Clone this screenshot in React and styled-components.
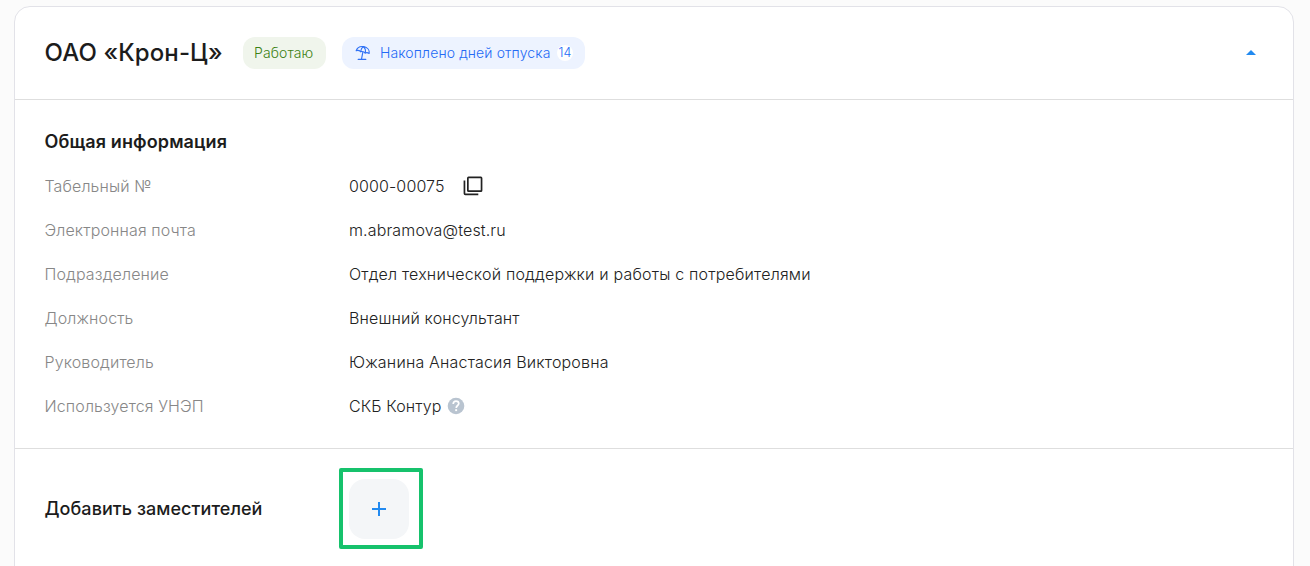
import React from "react";
import styled, { createGlobalStyle } from "styled-components";

const GlobalStyle = createGlobalStyle`
  *, *::before, *::after { box-sizing: border-box; }
  body {
    margin: 0;
    height: 566px;
    overflow: hidden;
    background: #fbfbfb;
    color: #222;
    font-family: Inter, "Liberation Sans", sans-serif;
    font-size: 16px;
    line-height: 24px;
  }
`;

const Page = styled.main`
  height: 566px;
  padding: 6px 16px 0 14px;
  overflow: hidden;
`;

const Card = styled.section`
  height: 600px;
  border: 1px solid #e2e2e8;
  border-radius: 16px;
  background: #fff;
`;

const Header = styled.header`
  display: flex;
  align-items: center;
  height: 93px;
  padding: 0 37px 0 29.5px;
  border-bottom: 1px solid #dedede;
`;

const Title = styled.h1`
  margin: 0 20px 0 0;
  width: 178.5px;
  font-size: 24px;
  line-height: 32px;
  font-weight: 550;
  letter-spacing: 0.12px;
  color: #1c1c1c;
  white-space: nowrap;
`;

const Badge = styled.span`
  display: flex;
  align-items: center;
  height: 32px;
  width: ${(p) => p.$width}px;
  margin-right: 16px;
  padding: 0 ${(p) => (p.$tone === "green" ? "11px" : "12px 0 13px")};
  border-radius: 12px;
  background: ${(p) => (p.$tone === "green" ? "#f0f5ec" : "#edf3ff")};
  color: ${(p) => (p.$tone === "green" ? "#3c8214" : "#246af5")};
  font-size: 14px;
  font-weight: 350;
  line-height: 20px;
  letter-spacing: 0.12px;
  white-space: nowrap;
`;

const BadgeText = styled.span`
  margin-left: ${(p) => p.$gap || 0}px;
`;

const Count = styled.span`
  display: flex;
  align-items: center;
  justify-content: center;
  width: 16px;
  height: 16px;
  margin-left: auto;
  border-radius: 8px;
  background: #fff;
  font-size: 12.5px;
  line-height: 16px;
`;

const Toggle = styled.button`
  display: flex;
  margin: 0 0 1px auto;
  padding: 0;
  border: 0;
  background: none;
`;

const Info = styled.div`
  height: 349px;
  padding: 30px 29.5px 0;
  border-bottom: 1px solid #dedede;
`;

const Heading = styled.h2`
  margin: 0;
  font-size: 18px;
  line-height: 24px;
  font-weight: ${(p) => p.$weight};
  color: #1c1c1c;
  letter-spacing: ${(p) => p.$spacing || 0}px;
  white-space: nowrap;
`;

const Rows = styled.dl`
  display: grid;
  grid-template-columns: 304.5px 1fr;
  grid-auto-rows: 24px;
  row-gap: 20px;
  margin: 20px 0 0;
  font-weight: 350;
`;

const Label = styled.dt`
  color: #878787;
  letter-spacing: 0.12px;
`;

const Value = styled.dd`
  display: flex;
  align-items: center;
  gap: ${(p) => p.$gap || 0}px;
  margin: 0;
  letter-spacing: ${(p) => p.$spacing}px;
`;

const Deputies = styled.div`
  display: grid;
  grid-template-columns: 294px auto;
  align-items: center;
  padding: 19px 29.5px 0;
`;

const Highlight = styled.div`
  display: flex;
  align-items: center;
  width: 84px;
  height: 81px;
  padding-left: 6px;
  border: 4px solid #16c26c;
  border-radius: 2px;
`;

const AddButton = styled.button`
  display: flex;
  align-items: center;
  justify-content: center;
  width: 60px;
  height: 60px;
  padding: 0;
  border: 0;
  border-radius: 16px;
  background: #f4f6f8;
`;

const UmbrellaIcon = () => (
  <svg width="16" height="16" viewBox="0 0 16 16" fill="none" stroke="#3072f5" strokeWidth="1.15" strokeLinecap="round" strokeLinejoin="round">
    <path d="M1.200 5.700C2.200 2.600 5.400 1.100 8.700 1.600c3.800.6 6 3.500 5.500 6.900-1.300-1-2.700-1.100-4-.5C9 6.700 7.400 6.200 5.600 6.600 4.300 5.400 2.700 5.200 1.200 5.700Z" />
    <path d="M8.700 1.600C7 2.500 5.900 4.200 5.600 6.600M8.700 1.600C10.400 3.400 10.800 5.600 10.200 8M7.900 6.800 6.500 14.200M3.200 14.400h7.600" />
  </svg>
);

const CopyIcon = () => (
  <svg width="20" height="20" viewBox="0 0 20 20" fill="none" stroke="#222" strokeWidth="1.7">
    <rect x="4.850" y="1.450" width="13.700" height="13.700" rx=".7" />
    <path d="M1.450 4.500v13q0 .85.85.85h13" />
  </svg>
);

const HelpIcon = () => (
  <svg width="18" height="18" viewBox="0 0 18 18">
    <circle cx="9" cy="9" r="8.300" fill="#b9c4d0" />
    <path d="M6.200 6.900C6.200 5.100 7.300 4.100 9 4.100s2.800 1 2.800 2.500c0 1.900-2.600 2-2.600 4.300" fill="none" stroke="#fff" strokeWidth="1.700" />
    <rect x="8.200" y="12.200" width="1.900" height="1.900" fill="#fff" />
  </svg>
);

const fields = [
  { label: "Табельный №", value: "0000-00075", icon: <CopyIcon />, gap: 18.5, spacing: 0.12 },
  { label: "Электронная почта", value: "m.abramova@test.ru", spacing: 0.14 },
  { label: "Подразделение", value: "Отдел технической поддержки и работы с потребителями", spacing: 0.19 },
  { label: "Должность", value: "Внешний консультант", spacing: 0.14 },
  { label: "Руководитель", value: "Южанина Анастасия Викторовна", spacing: 0.19 },
  { label: "Используется УНЭП", value: "СКБ Контур", icon: <HelpIcon />, gap: 6, spacing: 0.1 },
];

export default function App() {
  return (
    <>
      <GlobalStyle />
      <Page>
        <Card>
          <Header>
            <Title>ОАО «Крон-Ц»</Title>
            <Badge $tone="green" $width={83}>
              <BadgeText>Работаю</BadgeText>
            </Badge>
            <Badge $tone="blue" $width={243}>
              <UmbrellaIcon />
              <BadgeText $gap={9}>Накоплено дней отпуска</BadgeText>
              <Count>14</Count>
            </Badge>
            <Toggle aria-label="Свернуть">
              <svg width="10" height="5" viewBox="0 0 10 5">
                <path d="M0 5 5 0l5 5Z" fill="#228af0" />
              </svg>
            </Toggle>
          </Header>
          <Info>
            <Heading $weight={560} $spacing={0.11}>Общая информация</Heading>
            <Rows>
              {fields.map((f) => (
                <React.Fragment key={f.label}>
                  <Label>{f.label}</Label>
                  <Value $gap={f.gap} $spacing={f.spacing}>
                    <span>{f.value}</span>
                    {f.icon}
                  </Value>
                </React.Fragment>
              ))}
            </Rows>
          </Info>
          <Deputies>
            <Heading $weight={530} $spacing={0.06}>Добавить заместителей</Heading>
            <Highlight>
              <AddButton aria-label="Добавить">
                <svg width="14" height="14" viewBox="0 0 14 14">
                  <path d="M7 0v14M0 7h14" stroke="#228af0" strokeWidth="2" />
                </svg>
              </AddButton>
            </Highlight>
          </Deputies>
        </Card>
      </Page>
    </>
  );
}
